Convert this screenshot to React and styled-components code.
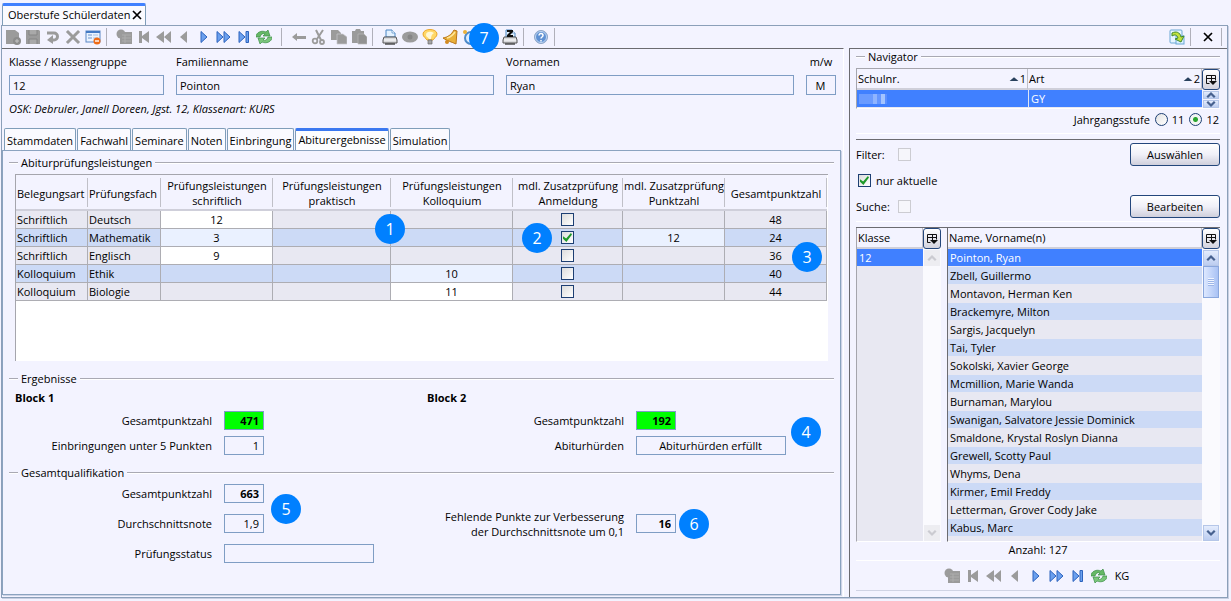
import React, { useState } from "react";
import styled, { createGlobalStyle, css } from "styled-components";

const GlobalStyle = createGlobalStyle`
  *, *::before, *::after { box-sizing: border-box; }
  body {
    margin: 0;
    background: #f3f3ff;
    color: #000;
    font: 11px/16px "Open Sans", "Noto Sans", sans-serif;
  }
  input, button { font: inherit; color: inherit; margin: 0; }
  table { border-collapse: separate; border-spacing: 0; table-layout: fixed; width: 100%; }
  th { font-weight: normal; }
  svg { flex: none; }
`;

// Mock data
const results = [
  { type: "Schriftlich", subject: "Deutsch", written: "12", total: 48 },
  { type: "Schriftlich", subject: "Mathematik", written: "3", extra: true, extraPoints: "12", total: 24 },
  { type: "Schriftlich", subject: "Englisch", written: "9", total: 36 },
  { type: "Kolloquium", subject: "Ethik", oral: "10", total: 40 },
  { type: "Kolloquium", subject: "Biologie", oral: "11", total: 44 },
];

const students = [
  "Pointon, Ryan", "Zbell, Guillermo", "Montavon, Herman Ken", "Brackemyre, Milton",
  "Sargis, Jacquelyn", "Tai, Tyler", "Sokolski, Xavier George", "Mcmillion, Marie Wanda",
  "Burnaman, Marylou", "Swanigan, Salvatore Jessie Dominick", "Smaldone, Krystal Roslyn Dianna",
  "Grewell, Scotty Paul", "Whyms, Dena", "Kirmer, Emil Freddy", "Letterman, Grover Cody Jake",
  "Kabus, Marc",
];

const tabs = ["Stammdaten", "Fachwahl", "Seminare", "Noten", "Einbringung", "Abiturergebnisse", "Simulation"];

// Icons
const G = "#9b9b9b";
const blue = { fill: "#6ba0ee", stroke: "#2c63bd", strokeWidth: 1 };

const printer = (
  <>
    <path d="M4 8V1h6l3 3v4z" fill="#e3f1ff" stroke="#4b86c4" />
    <path d="M10 1v3h3" fill="#fff" stroke="#4b86c4" strokeWidth=".7" />
    <path d="M2 8h12l1 3v3H1v-3z" fill="#d9d9dc" stroke="#555" />
    <path d="M2 11h12" stroke="#fff" />
    <path d="M3 15h10" stroke="#444" strokeWidth="1.4" />
  </>
);

const icons = {
  add: <><path d="M1 1h9l4 3v11H1z" fill={G} /><circle cx="12" cy="12" r="4" fill="#8c8c8c" /><path d="M12 10v4M10 12h4" stroke="#c4c4c4" /></>,
  save: <><path d="M1 1h13l1 1v13H1z" fill={G} /><path d="M4 1v5h8V1M4 15v-5h8v5" fill="#a9a9a9" stroke="#858585" /></>,
  undo: <><path d="M2 4h7a3.500 3.500 0 0 1 0 7H7" fill="none" stroke={G} strokeWidth="3" /><path d="M8 6v9l-6-4z" fill={G} /></>,
  remove: <path d="M3 3l10 10M13 3L3 13" stroke={G} strokeWidth="3" strokeLinecap="square" />,
  form: <><rect x="1" y="2" width="14" height="11" fill="#eaf3ff" stroke="#5a87c6" /><path d="M1 3h14" stroke="#4379c4" strokeWidth="2" /><path d="M3 6h4M3 9h4" stroke="#6c94cc" /><path d="M8 6h5M8 9h5" stroke="#a9c0df" /><circle cx="12" cy="12" r="3.5" fill="#ee6a16" /><path d="M10 12h4" stroke="#fff" strokeWidth="1.4" /></>,
  sheet: <><circle cx="5" cy="5" r="4.5" fill={G} /><rect x="4" y="3" width="12" height="12" fill={G} /><path d="M6 6h9M6 9h9M6 12h9M9 6v8" stroke="#b5b5b5" strokeWidth=".7" /></>,
  first: <path d="M3 2h3v5l7-5v12L6 9v5H3z" fill={G} />,
  rewind: <path d="M0 8l8-6v12zM8 8l7-6v12z" fill={G} />,
  prev: <path d="M4 8l7-6v12z" fill={G} />,
  next: <path d="M5 2.500l6 5.500-6 5.500z" {...blue} />,
  forward: <path d="M1 2.500l6 5.500-6 5.500zM8 2.500l6 5.500-6 5.500z" {...blue} />,
  last: <path d="M3 2.500l6 5.500-6 5.500zM10 2.500h2.500v11H10z" {...blue} />,
  refresh: <><path d="M0 8c0-5 6-7 10-5l2-2 2 6H7l2-2C7 4 5 5 4 8z" fill="#66b866" stroke="#3b8e45" strokeWidth=".7" /><path d="M16 8c0 5-6 7-10 5l-2 2-2-6h7l-2 2c2 1 4 0 5-3z" fill="#7bc67b" stroke="#3b8e45" strokeWidth=".7" /></>,
  back: <path d="M1 8l5-4v3h9v3H6v2z" fill={G} />,
  cut: <><path d="M5 1l5 10M12 1L6 10" stroke={G} strokeWidth="2" /><circle cx="4" cy="12" r="2.3" fill="none" stroke={G} strokeWidth="1.800" /><circle cx="11" cy="13" r="2" fill="none" stroke={G} strokeWidth="1.800" /></>,
  copy: <><path d="M0 1h7l3 3v7H0z" fill={G} /><path d="M6 5h6l4 3v7H6z" fill={G} stroke="#c9c9ce" strokeWidth=".7" /></>,
  paste: <><path d="M1 2h3l1-2h4l1 2h3v12H1z" fill={G} /><path d="M7 5h6l3 3v7H7z" fill="#929292" stroke="#b9b9b9" strokeWidth=".7" /></>,
  print: printer,
  printZ: <>{printer}<path d="M5 1h6v2L8 6h3v2H5V6l3-3H5z" fill="#111" /></>,
  disc: <><ellipse cx="8" cy="8" rx="8" ry="5.500" fill={G} /><circle cx="8" cy="8" r="2.500" fill="#868686" /></>,
  bulb: <><path d="M5 11C4 9 1 8 1 5c0-6 14-6 14 0 0 3-3 4-4 6z" fill="#ffd868" stroke="#eaa62c" /><path d="M4 6c0-4 5-4 8-2-2 1-3 3-3 6H7C6 8 4 8 4 6z" fill="#fff8d6" /><path d="M6 11h4v4H6z" fill="#a5a5a5" stroke="#6a6a6a" strokeWidth=".7" /></>,
  bell: <><path d="M12 1l3 1-1 13C10 13 5 12 1 9c5-1 8-3 11-8z" fill="#eab13a" stroke="#b9761a" /><circle cx="5" cy="13" r="2" fill="#d38b20" /><path d="M5 9c4-1 6-3 8-6" stroke="#ffe69b" strokeWidth="1.500" fill="none" /></>,
  clock: <><circle cx="9" cy="9" r="6" fill="#dcecff" stroke="#4d8ac8" strokeWidth="2" /><circle cx="3" cy="3" r="2" fill="#eab13a" /></>,
  help: <><circle cx="8" cy="8" r="6.500" fill="#5f91d3" stroke="#91a8c8" /><circle cx="8" cy="8" r="5.500" fill="none" stroke="#dbe8fa" strokeWidth=".8" /><path d="M6 6.500c0-2.700 4-2.500 4 0C10 8 8 8 8 9.500M8 11v1.400" fill="none" stroke="#fff" strokeWidth="1.500" /></>,
  export: <><rect x="1" y="1" width="12" height="13" rx="1" fill="#e6f5ff" stroke="#6aa7d4" /><rect x="7" y="7" width="8" height="8" fill="#d8efff" stroke="#6aa7d4" /><path d="M3 4c4-2 8-1 9 4l3-1-3 6-6-3 3-1C8 6 6 5 3 7z" fill="#c2e03f" stroke="#3f8a2c" /></>,
  close: <path d="M4 4l8 8M12 4l-8 8" stroke="#000" strokeWidth="1.700" />,
  columns: <><path d="M3.500 11.500v-8h9v5M3.500 6.500h9M8.500 3.500v6M3.500 11.500h3" fill="none" stroke="#111" /><path d="M6 9h8l-4 4z" fill="#111" /></>,
  up: <path d="M3 11l5-5 5 5" fill="none" stroke="currentColor" strokeWidth="3" />,
  down: <path d="M3 5l5 5 5-5" fill="none" stroke="currentColor" strokeWidth="3" />,
  sort: <path d="M1 11l7-6 7 6z" fill="#29415e" />,
};

const Icon = ({ name, size = 16 }) => (
  <svg width={size} height={size} viewBox="0 0 16 16" aria-hidden="true">{icons[name]}</svg>
);

// Window frame
const Page = styled.div`
  display: flex;
  flex-direction: column;
  min-height: 100vh;
  padding: 3px 3px 3px 1px;
`;

const WindowTab = styled.div`
  display: flex;
  align-items: center;
  align-self: flex-start;
  height: 22px;
  margin-left: 1px;
  padding: 0 2px 2px 5px;
  background: #fafaff;
  border: 1px solid #7f9db9;
  border-top: 3px solid #4080ff;
  border-bottom: 0;
  border-radius: 2px 2px 0 0;
`;

const PlainButton = styled.button`
  display: flex;
  align-items: center;
  justify-content: center;
  width: ${(p) => p.$w || 20}px;
  height: 20px;
  padding: 0;
  border: 0;
  background: none;
`;

const Window = styled.main`
  display: flex;
  flex-direction: column;
  flex: 1;
  border: 1px solid #8b9fb9;
  box-shadow: 1px 1px 0 #c9cfe2;
`;

const Toolbar = styled.div`
  position: relative;
  display: flex;
  align-items: center;
  height: 22px;
  padding-left: 1px;
`;

const Separator = styled.span`
  width: 1px;
  height: 18px;
  margin: 0 7px 0 ${(p) => (p.$wide ? 7 : 3)}px;
  background: #b0b0ba;
  &:last-child { margin-right: 5px; }
`;

const ToolbarEnd = styled.div`
  display: flex;
  align-items: center;
  margin-left: auto;
`;

const Panes = styled.div`
  display: flex;
  flex: 1;
  gap: 5px;
`;

const MainPane = styled.section`
  display: flex;
  flex-direction: column;
  flex: 1;
  min-width: 0;
  padding: 5px 2px 2px 0;
  border-top: 1px solid #6b6b70;
  border-right: 1px solid #fff;
`;

const SidePane = styled.aside`
  display: flex;
  flex-direction: column;
  width: 378px;
  padding: 0 7px 0 6px;
  border-top: 1px solid #6b6b70;
  border-left: 1px solid #6b6b70;
`;

// Student header
const StudentForm = styled.div`
  display: grid;
  grid-template-columns: 155px 318fr 288fr 30px;
  gap: 12px;
  padding: 0 5px 0 7px;
`;

const Field = styled.label`
  display: flex;
  flex-direction: column;
  gap: 5px;
  text-align: ${(p) => (p.$center ? "center" : "left")};
`;

const TextBox = styled.input`
  width: ${(p) => p.$w || "100%"};
  height: ${(p) => p.$h || 19}px;
  padding: 0 4px 0 3px;
  border: 1px solid #7f9dc4;
  border-radius: 0;
  background: ${(p) => (p.$ok ? "#00ff00" : "#f3f3ff")};
  font-weight: ${(p) => (p.$bold ? "bold" : "normal")};
  text-align: ${(p) => p.$align || "left"};
`;

const ClassNote = styled.p`
  margin: 6px 7px 11px;
  font-style: italic;
`;

const TabList = styled.div`
  display: flex;
  gap: 1px;
  padding-left: 2px;
`;

const Tab = styled.button`
  height: 22px;
  padding: 3px 2px 0;
  background: #fafaff;
  border: 1px solid #7f9db9;
  border-bottom: 0;
  border-radius: 2px 2px 0 0;
  white-space: nowrap;
  ${(p) => p.$active && css`
    padding-top: 0;
    padding-bottom: 2px;
    background: #fdfdff;
    border-top: 3px solid #3b78f0;
  `}
`;

const TabPanel = styled.div`
  flex: 1;
  padding: 4px 6px 20px;
  border: 1px solid #8ba3c0;
  box-shadow: 1px 1px 0 #cdd3e6;
`;

const Legend = styled.h2`
  display: flex;
  align-items: center;
  gap: 3px;
  margin: ${(p) => p.$top || 0}px 0 3px;
  font-size: 11px;
  font-weight: normal;
  white-space: nowrap;
  &::before, &::after {
    content: "";
    width: 9px;
    height: 2px;
    background: #a9a9b3;
    border-bottom: 1px solid #fff;
  }
  &::after { flex: 1; }
`;

const ResultFrame = styled.div`
  position: relative;
  min-height: 187px;
  margin: 0 6px;
  padding-right: 1px;
  background: #fff;
  border-top: 1px solid #a5a5ad;
  border-left: 1px solid #a5a5ad;
`;

const ResultTable = styled.table`
  th {
    height: 36px;
    padding: 2px 1px 0;
    background: linear-gradient(#c0c0c8, #c0c0c8) right 3px / 1px 29px no-repeat #f3f3ff;
    border-bottom: 2px solid #cfcfda;
    line-height: 15px;
    white-space: nowrap;
  }
  th:nth-child(-n + 2) { text-align: left; }
`;

const ResultRow = styled.tr`
  background: ${(p) => (p.$odd ? "#ccdaf6" : "#e8e8f2")};
  td {
    height: 18px;
    padding: 0 1px;
    border-right: 1px solid #adadb3;
    border-bottom: 1px solid #adadb3;
    text-align: center;
    vertical-align: middle;
  }
  td:nth-child(-n + 2) { text-align: left; }
`;

const EditableCell = styled.td`
  background: ${(p) => (p.$value ? (p.$odd ? "#eaf1ff" : "#fff") : "transparent")};
`;

const CheckBox = styled.input`
  display: block;
  flex: none;
  width: 13px;
  height: 13px;
  margin: ${(p) => (p.$center ? "0 auto" : "0")};
  appearance: none;
  background: linear-gradient(135deg, #dcdcdc, #fff);
  border: 1px solid #1d3f73;
  &:disabled { border-color: #ccccd2; background: #f6f6fb; }
  &:checked::after {
    content: "";
    display: block;
    width: 9px;
    height: 9px;
    margin: 1px;
    background: #1f9a2a;
    clip-path: polygon(0 35%, 35% 62%, 88% 0, 100% 18%, 38% 100%, 0 65%);
  }
`;

const Badge = styled.span`
  position: absolute;
  z-index: 2;
  left: ${(p) => p.$x}px;
  top: ${(p) => p.$y}px;
  width: 30px;
  height: 30px;
  border-radius: 50%;
  background: #0080ff;
  color: #fff;
  font-size: 16px;
  line-height: 30px;
  text-align: center;
`;

const Blocks = styled.div`
  position: relative;
  display: grid;
  grid-template-columns: 412px 1fr;
  padding-left: 6px;
`;

const Block = styled.div`
  display: grid;
  grid-template-columns: 197px 150px;
  column-gap: 12px;
  row-gap: ${(p) => p.$gap}px;
  align-content: start;
  align-items: center;
  label { text-align: right; }
`;

const TwoLineLabel = styled.label`
  grid-row: 2;
  height: 19px;
  display: flex;
  align-items: center;
  justify-content: flex-end;
  line-height: 15px;
`;

const EmptyLine = styled.span`
  grid-column: 1 / -1;
  height: 19px;
`;

const BlockTitle = styled.h3`
  grid-column: 1 / -1;
  margin: 0;
  font-size: 11px;
  line-height: 15px;
`;

// Navigator
const ListBox = styled.div`
  display: flex;
  flex: ${(p) => (p.$w || p.$framed ? "none" : 1)};
  width: ${(p) => (p.$w ? `${p.$w}px` : "auto")};
  background: #f3f3ff;
  border-left: 1px solid ${(p) => (p.$dark ? "#6b6b70" : "#a5a5ad")};
  border-bottom: 1px solid #fff;
  ${(p) => p.$framed && css`border-top: 1px solid #a5a5ad;`}
`;

const ListBody = styled.div`
  flex: 1;
  min-width: 0;
  background: #e8e8f2;
`;

const ListTable = styled.table`
  th {
    height: 21px;
    padding: 1px 1px 0;
    background: #f3f3ff;
    border-right: 1px solid #c0c0c8;
    border-bottom: 2px solid #cfcfda;
    text-align: left;
  }
`;

const ListRow = styled.tr`
  background: ${(p) => (p.$selected ? "#4080ff" : p.$odd ? "#ccdaf6" : "#e8e8f2")};
  color: ${(p) => (p.$selected ? "#fff" : "#000")};
  td {
    height: 18px;
    padding: 0 2px;
    border-bottom: 1px solid #e8e8f2;
    white-space: nowrap;
  }
  td + td { border-left: 1px solid #dfe6f5; }
`;

const SortHead = styled.span`
  display: flex;
  align-items: center;
  gap: 1px;
  svg { margin-left: auto; }
`;

const Redacted = styled.span`
  display: block;
  width: 28px;
  height: 10px;
  background: linear-gradient(90deg, #6a9bff 0 14px, #8fb4ff 14px 18px, #6496ff 18px 22px, #a3c4ff 22px 26px, #5a8fff 26px);
`;

const ScrollColumn = styled.div`
  display: flex;
  flex-direction: column;
  align-items: center;
  width: 18px;
  background: ${(p) => (p.$short ? "transparent" : "#fafafe")};
`;

const ColumnButton = styled.button`
  display: flex;
  align-items: center;
  justify-content: center;
  width: 18px;
  height: 21px;
  padding: 0;
  border: 1px solid #24477c;
  border-radius: 3px;
  background: linear-gradient(#fff, #d3d3de);
`;

const ScrollButton = styled.button`
  display: flex;
  align-items: center;
  justify-content: center;
  width: 16px;
  height: ${(p) => p.$h || 16}px;
  margin-top: ${(p) => (p.$end ? "auto" : "1px")};
  padding: 0;
  border: 1px solid #b5c6e8;
  background: linear-gradient(#e4ecfd, #bccdf0);
  color: #47618f;
  &:disabled { border-color: #ededf2; background: #ededf1; color: #cbcbd1; }
`;

const Thumb = styled.div`
  display: flex;
  align-items: center;
  justify-content: center;
  width: 16px;
  height: 32px;
  border: 1px solid #8aa7dd;
  background: linear-gradient(90deg, #dde8ff, #a9c2f4);
  &::after {
    content: "";
    width: 6px;
    height: 8px;
    background: repeating-linear-gradient(#f0f5ff 0 1px, #9db6e8 1px 2px);
  }
`;

const Grades = styled.div`
  display: flex;
  align-items: center;
  justify-content: flex-end;
  gap: 5px;
  height: 25px;
  padding: 0 1px 3px 0;
  border-bottom: 1px solid #fff;
  label { display: flex; align-items: center; gap: 4px; }
`;

const Radio = styled.input`
  flex: none;
  width: 13px;
  height: 13px;
  appearance: none;
  border: 1px solid #1d3f73;
  border-radius: 50%;
  background: linear-gradient(135deg, #e2e2e2, #fff);
  &:checked { background: radial-gradient(circle, #2aa52f 0 2px, #f3f5f3 3px); }
`;

const Filters = styled.div`
  display: grid;
  grid-template-columns: 1fr 90px;
  grid-template-rows: 23px 29px 23px;
  align-items: center;
  margin-top: 5px;
  padding: 3px 0;
  border-top: 1px solid #6b6b70;
  border-bottom: 1px solid #fff;
`;

const FilterLabel = styled.label`
  display: grid;
  grid-template-columns: 42px 13px;
  align-items: center;
`;

const CheckLabel = styled.label`
  display: flex;
  align-items: center;
  gap: 5px;
  grid-column: 1 / -1;
  padding-left: 2px;
`;

const Button = styled.button`
  height: 23px;
  padding: 0;
  border: 1px solid #24477c;
  border-radius: 3px;
  background: linear-gradient(#fff, #f0f0f8 50%, #cfcfdc);
`;

const Lists = styled.div`
  display: flex;
  flex: 1;
  gap: 6px;
  margin-top: 5px;
  border-top: 1px solid #6b6b70;
`;

const Count = styled.div`
  height: 19px;
  border-bottom: 1px solid #fff;
  text-align: center;
`;

const NavBar = styled.div`
  display: flex;
  align-items: center;
  justify-content: center;
  gap: 1px;
  height: 30px;
  margin-bottom: 6px;
  padding-right: 5px;
  border-bottom: 1px solid #cfd3e4;
  span { margin-left: 5px; }
`;

const Tools = ({ names }) =>
  names.map((name) => (
    <PlainButton key={name} aria-label={name}><Icon name={name} /></PlainButton>
  ));

const ResultField = ({ id, label, value, width = "40px", align = "right", ...rest }) => (
  <>
    <label htmlFor={id}>{label}</label>
    <TextBox id={id} readOnly value={value} $w={width} $align={align} {...rest} />
  </>
);

const navTools = ["sheet", "first", "rewind", "prev", "next", "forward", "last", "refresh"];

const App = () => {
  const [activeTab, setActiveTab] = useState("Abiturergebnisse");
  const [selected, setSelected] = useState(0);
  const [grade, setGrade] = useState("12");

  return (
    <Page>
      <GlobalStyle />
      <WindowTab>
        Oberstufe Schülerdaten
        <PlainButton $w={12} aria-label="Schließen"><Icon name="close" /></PlainButton>
      </WindowTab>

      <Window>
        <Toolbar>
          <Tools names={["add", "save", "undo", "remove", "form"]} />
          <Separator />
          <Tools names={navTools} />
          <Separator $wide />
          <Tools names={["back", "cut", "copy", "paste"]} />
          <Separator />
          <Tools names={["print", "disc", "bulb", "bell", "clock"]} />
          <PlainButton aria-label="mehr" />
          <Tools names={["printZ"]} />
          <Separator />
          <Tools names={["help"]} />
          <Separator />
          <Badge $x={467} $y={-3}>7</Badge>
          <ToolbarEnd>
            <Tools names={["export"]} />
            <Separator />
            <Tools names={["close"]} />
            <Separator />
          </ToolbarEnd>
        </Toolbar>

        <Panes>
          <MainPane>
            <StudentForm>
              <Field>Klasse / Klassengruppe<TextBox $h={20} readOnly value="12" /></Field>
              <Field>Familienname<TextBox $h={20} readOnly value="Pointon" /></Field>
              <Field>Vornamen<TextBox $h={20} readOnly value="Ryan" /></Field>
              <Field $center>m/w<TextBox $h={20} $align="center" readOnly value="M" /></Field>
            </StudentForm>
            <ClassNote>OSK: Debruler, Janell Doreen, Jgst. 12, Klassenart: KURS</ClassNote>

            <TabList>
              {tabs.map((tab) => (
                <Tab key={tab} $active={tab === activeTab} onClick={() => setActiveTab(tab)}>{tab}</Tab>
              ))}
            </TabList>

            <TabPanel>
              <Legend>Abiturprüfungsleistungen</Legend>
              <ResultFrame>
                <ResultTable>
                  <colgroup>
                    {[72, 73, 112, 118, 122, 110, 102, 102].map((w, i) => <col key={i} width={w} />)}
                  </colgroup>
                  <thead>
                    <tr>
                      <th>Belegungsart</th>
                      <th>Prüfungsfach</th>
                      <th>Prüfungsleistungen<br />schriftlich</th>
                      <th>Prüfungsleistungen<br />praktisch</th>
                      <th>Prüfungsleistungen<br />Kolloquium</th>
                      <th>mdl. Zusatzprüfung<br />Anmeldung</th>
                      <th>mdl. Zusatzprüfung<br />Punktzahl</th>
                      <th>Gesamtpunktzahl</th>
                    </tr>
                  </thead>
                  <tbody>
                    {results.map((row, i) => {
                      const odd = i % 2 === 1;
                      return (
                        <ResultRow key={row.subject} $odd={odd}>
                          <td>{row.type}</td>
                          <td>{row.subject}</td>
                          <EditableCell $odd={odd} $value={row.written}>{row.written}</EditableCell>
                          <td />
                          <EditableCell $odd={odd} $value={row.oral}>{row.oral}</EditableCell>
                          <td>
                            <CheckBox type="checkbox" $center defaultChecked={row.extra} aria-label={`Anmeldung ${row.subject}`} />
                          </td>
                          <EditableCell $odd={odd} $value={row.extraPoints}>{row.extraPoints}</EditableCell>
                          <td>{row.total}</td>
                        </ResultRow>
                      );
                    })}
                  </tbody>
                </ResultTable>
                <Badge $x={359} $y={39}>1</Badge>
                <Badge $x={506} $y={48}>2</Badge>
                <Badge $x={776} $y={67}>3</Badge>
              </ResultFrame>

              <Legend $top={10}>Ergebnisse</Legend>
              <Blocks>
                <Block $gap={6}>
                  <BlockTitle>Block 1</BlockTitle>
                  <ResultField id="b1-total" label="Gesamtpunktzahl" value="471" $ok $bold />
                  <ResultField id="b1-low" label="Einbringungen unter 5 Punkten" value="1" />
                </Block>
                <Block $gap={6}>
                  <BlockTitle>Block 2</BlockTitle>
                  <ResultField id="b2-total" label="Gesamtpunktzahl" value="192" $ok $bold />
                  <ResultField id="b2-check" label="Abiturhürden" value="Abiturhürden erfüllt" width="150px" align="center" />
                </Block>
                <Badge $x={782} $y={27}>4</Badge>
              </Blocks>

              <Legend $top={10}>Gesamtqualifikation</Legend>
              <Blocks>
                <Block $gap={11}>
                  <ResultField id="q-total" label="Gesamtpunktzahl" value="663" $bold />
                  <ResultField id="q-avg" label="Durchschnittsnote" value="1,9" />
                  <ResultField id="q-state" label="Prüfungsstatus" value="" width="150px" />
                </Block>
                <Block $gap={11}>
                  <EmptyLine />
                  <TwoLineLabel htmlFor="q-missing">
                    <span>Fehlende Punkte zur Verbesserung<br />der Durchschnittsnote um 0,1</span>
                  </TwoLineLabel>
                  <TextBox id="q-missing" readOnly value="16" $w="40px" $align="right" $bold />
                </Block>
                <Badge $x={262} $y={10}>5</Badge>
                <Badge $x={670} $y={25}>6</Badge>
              </Blocks>
            </TabPanel>
          </MainPane>

          <SidePane>
            <Legend>Navigator</Legend>
            <ListBox $framed>
              <ListBody>
                <ListTable>
                  <colgroup><col width="171" /><col /></colgroup>
                  <thead>
                    <tr>
                      <th><SortHead>Schulnr. <Icon name="sort" size={10} />1</SortHead></th>
                      <th><SortHead>Art <Icon name="sort" size={10} />2</SortHead></th>
                    </tr>
                  </thead>
                  <tbody>
                    <ListRow $selected><td><Redacted /></td><td>GY</td></ListRow>
                  </tbody>
                </ListTable>
              </ListBody>
              <ScrollColumn $short>
                <ColumnButton aria-label="Spalten"><Icon name="columns" /></ColumnButton>
                <ScrollButton $h={8} aria-label="hoch"><Icon name="up" size={12} /></ScrollButton>
                <ScrollButton $h={8} aria-label="runter"><Icon name="down" size={12} /></ScrollButton>
              </ScrollColumn>
            </ListBox>

            <Grades>
              Jahrgangsstufe
              {["11", "12"].map((g) => (
                <label key={g}>
                  <Radio type="radio" name="grade" checked={grade === g} onChange={() => setGrade(g)} />{g}
                </label>
              ))}
            </Grades>

            <Filters>
              <FilterLabel>Filter:<CheckBox type="checkbox" disabled /></FilterLabel>
              <Button>Auswählen</Button>
              <CheckLabel><CheckBox type="checkbox" defaultChecked />nur aktuelle</CheckLabel>
              <FilterLabel>Suche:<CheckBox type="checkbox" disabled /></FilterLabel>
              <Button>Bearbeiten</Button>
            </Filters>

            <Lists>
              <ListBox $w={85}>
                <ListBody>
                  <ListTable>
                    <thead><tr><th>Klasse</th></tr></thead>
                    <tbody><ListRow $selected><td>12</td></ListRow></tbody>
                  </ListTable>
                </ListBody>
                <ScrollColumn>
                  <ColumnButton aria-label="Spalten"><Icon name="columns" /></ColumnButton>
                  <ScrollButton disabled aria-label="hoch"><Icon name="up" size={12} /></ScrollButton>
                  <ScrollButton disabled $end aria-label="runter"><Icon name="down" size={12} /></ScrollButton>
                </ScrollColumn>
              </ListBox>
              <ListBox $dark>
                <ListBody>
                  <ListTable>
                    <thead><tr><th>Name, Vorname(n)</th></tr></thead>
                    <tbody>
                      {students.map((name, i) => (
                        <ListRow key={name} $odd={i % 2 === 1} $selected={i === selected} onClick={() => setSelected(i)}>
                          <td>{name}</td>
                        </ListRow>
                      ))}
                    </tbody>
                  </ListTable>
                </ListBody>
                <ScrollColumn>
                  <ColumnButton aria-label="Spalten"><Icon name="columns" /></ColumnButton>
                  <ScrollButton aria-label="hoch"><Icon name="up" size={12} /></ScrollButton>
                  <Thumb />
                  <ScrollButton $end aria-label="runter"><Icon name="down" size={12} /></ScrollButton>
                </ScrollColumn>
              </ListBox>
            </Lists>
            <Count>Anzahl: 127</Count>
            <NavBar>
              <Tools names={navTools} />
              <span>KG</span>
            </NavBar>
          </SidePane>
        </Panes>
      </Window>
    </Page>
  );
};

export default App;
